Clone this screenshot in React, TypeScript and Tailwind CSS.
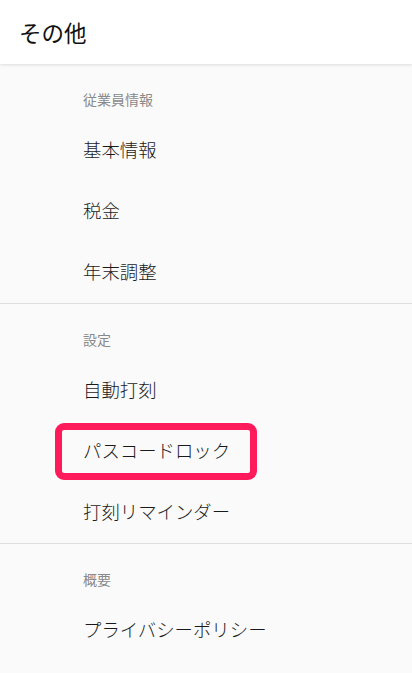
import React from "react";

const font = { fontFamily: '"Noto Sans CJK JP", "Noto Sans", sans-serif' };

function SubHeader({ label }: { label: string }) {
  return (
    <div className="h-[56px] pl-[83px] pt-[25px] text-[14px] leading-[20px] text-[#8a8a8a]">
      {label}
    </div>
  );
}

function Item({ label, highlight }: { label: string; highlight?: boolean }) {
  return (
    <div className="relative flex h-[61px] items-center pb-[3px] pl-[83px] text-[18.4px] font-light text-[#1a1a1a]">
      <span className="leading-[24px]">{label}</span>
      {highlight && (
        <div className="pointer-events-none absolute left-[55px] top-[2px] h-[57px] w-[202px] rounded-[9px] border-[7px] border-[#ff1a5c]" />
      )}
    </div>
  );
}

export default function App() {
  return (
    <div className="min-h-[673px] w-full bg-[#fafafa]" style={font}>
      <div className="relative z-10 flex h-[64px] items-center bg-white pb-[1px] pl-[19px] shadow-[0_1px_3px_rgba(0,0,0,0.12)]">
        <span className="text-[22.5px] leading-[30px] text-[#111111]">その他</span>
      </div>
      <div>
        <SubHeader label="従業員情報" />
        <Item label="基本情報" />
        <Item label="税金" />
        <Item label="年末調整" />
      </div>
      <div className="h-px bg-[#dedede]" />
      <div>
        <SubHeader label="設定" />
        <Item label="自動打刻" />
        <Item label="パスコードロック" highlight />
        <Item label="打刻リマインダー" />
      </div>
      <div className="h-px bg-[#dedede]" />
      <div>
        <SubHeader label="概要" />
        <Item label="プライバシーポリシー" />
      </div>
    </div>
  );
}
